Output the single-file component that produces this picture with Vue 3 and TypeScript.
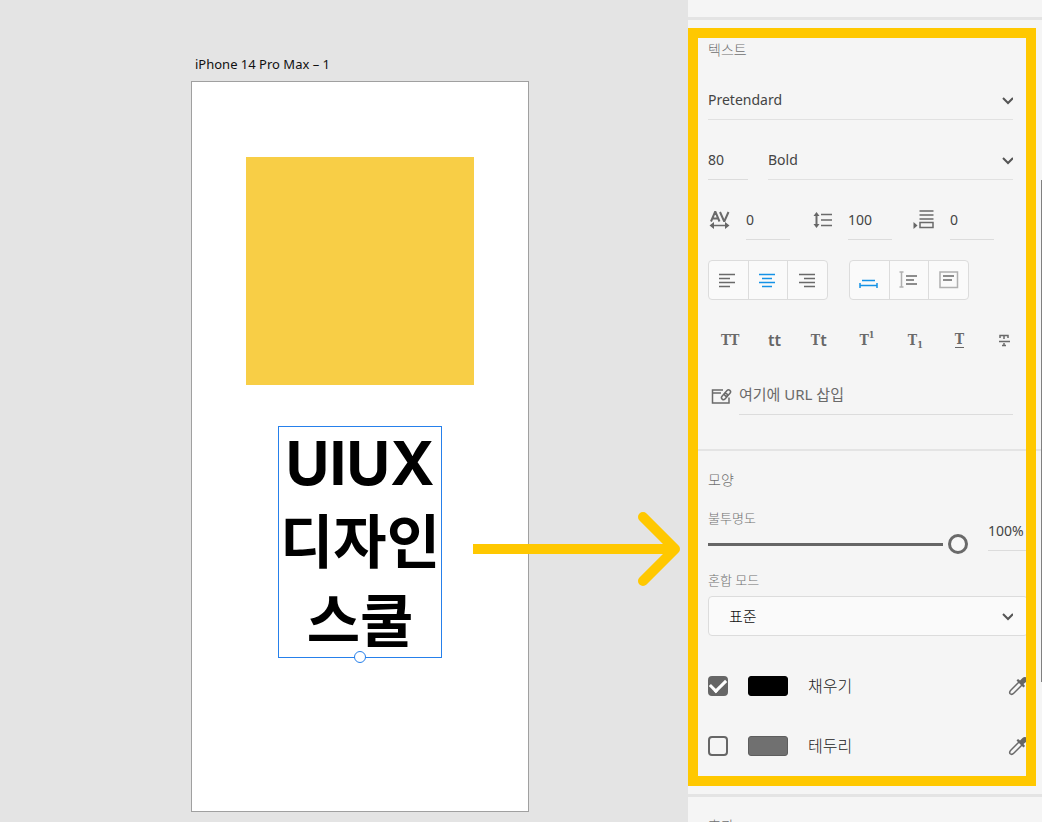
<script setup lang="ts">
import { ref, computed } from 'vue'

type Metric = { id: string; label: string; value: string }
type Paint = { id: string; label: string; on: boolean; color: string; edge: string }

const family = ref('Pretendard')
const weight = ref('Bold')
const size = ref('80')
const link = ref('')
const opacity = ref(100)
const blend = ref('표준')
const align = ref('center')
const opacityText = computed(() => `${opacity.value}%`)

const metrics = ref<Metric[]>([
  { id: 'tracking', label: '문자 간격', value: '0' },
  { id: 'leading', label: '행 간격', value: '100' },
  { id: 'paragraph', label: '단락 간격', value: '0' },
])

const aligns = [
  { id: 'left', label: '왼쪽 정렬', d: 'M1 4.5H17M1 8.5H12M1 12.5H17M1 16.5H12' },
  { id: 'center', label: '가운데 정렬', d: 'M1 4.5H17M4 8.5H14M1 12.5H17M4 16.5H14' },
  { id: 'right', label: '오른쪽 정렬', d: 'M1 4.5H17M6 8.5H17M1 12.5H17M6 16.5H17' },
]

const paints = ref<Paint[]>([
  { id: 'fill', label: '채우기', on: true, color: '#000000', edge: '#000000' },
  { id: 'border', label: '테두리', on: false, color: '#707070', edge: '#5e5e5e' },
])
</script>

<template>
  <div class="app">
    <main class="canvas">
      <div class="artboard-name">iPhone 14 Pro Max – 1</div>
      <div class="artboard">
        <div class="square"></div>
        <div class="text-node">
          <div class="latin">UIUX</div>
          <div>디자인</div>
          <div>스쿨</div>
          <span class="handle"></span>
        </div>
      </div>
      <svg class="arrow" width="208" height="76" viewBox="0 0 208 76" fill="none" stroke="#ffc800" stroke-width="10" aria-hidden="true">
        <path d="M0 38H200" />
        <path d="M170 6L202 38L170 70" stroke-linecap="round" stroke-linejoin="round" />
      </svg>
    </main>

    <aside class="panel">
      <div class="strip"></div>
      <section class="text-section">
        <h2>텍스트</h2>
        <div class="row inset">
          <div class="picker grow">
            <select v-model="family" aria-label="글꼴"><option>Pretendard</option></select>
            <svg class="chevron" width="12" height="12" viewBox="0 0 12 12"><path d="M2 4L7 9L12 4" /></svg>
          </div>
        </div>
        <div class="row inset">
          <input v-model="size" class="line size" aria-label="글꼴 크기" />
          <div class="picker grow">
            <select v-model="weight" aria-label="글꼴 두께"><option>Bold</option></select>
            <svg class="chevron" width="12" height="12" viewBox="0 0 12 12"><path d="M2 4L7 9L12 4" /></svg>
          </div>
        </div>
        <div class="row">
          <label v-for="m in metrics" :key="m.id" class="metric">
            <svg v-if="m.id === 'tracking'" class="icon" width="24" height="24" viewBox="0 0 24 24" :aria-label="m.label">
              <path d="M3 13.500L7 4H7.500L11.500 13.500M4.500 10.500H10M12 4L16 13H16.500L20.500 4" stroke-width="2" />
              <path d="M5 17.500H19" stroke-width="1.500" />
              <path class="solid" d="M1.500 17.500L6 14V21ZM21.500 17.500L17 14V21Z" />
            </svg>
            <svg v-else-if="m.id === 'leading'" class="icon" width="24" height="24" viewBox="0 0 24 24" :aria-label="m.label">
              <path d="M6.500 7V17" stroke-width="2" />
              <path d="M11 6.500H22M11 12H22M11 17.500H22" />
              <path class="solid" d="M6.500 4L9.500 8H3.500ZM6.500 20L9.500 16H3.500Z" />
            </svg>
            <svg v-else class="icon" width="24" height="24" viewBox="0 0 24 24" :aria-label="m.label">
              <path d="M7.500 3H21.500M7.500 7H21.500M7.500 11H21.500M8 14.500H21V19.500H8Z" />
              <path class="solid" d="M1.500 14L5.500 17.500L1.500 21Z" />
            </svg>
            <input v-model="m.value" class="line" />
          </label>
        </div>
        <div class="row groups">
          <div class="group">
            <button v-for="a in aligns" :key="a.id" type="button" :class="{ active: align === a.id }" :aria-label="a.label" @click="align = a.id">
              <svg class="icon" width="20" height="20" viewBox="0 0 20 20"><path :d="a.d" /></svg>
            </button>
          </div>
          <div class="group">
            <button type="button" class="active" aria-label="자동 폭">
              <svg class="icon" width="20" height="20" viewBox="0 0 20 20"><path d="M3 10.500H16M1 15.500H18M1 13V18M18 13V18" /></svg>
            </button>
            <button type="button" aria-label="자동 높이">
              <svg class="icon" width="20" height="20" viewBox="0 0 20 20"><path class="pale" d="M2.500 2V17M.5 2H4.500M.5 17H4.500" /><path d="M7 6H18M7 10H15M7 14H18" /></svg>
            </button>
            <button type="button" aria-label="고정 크기">
              <svg class="icon" width="20" height="20" viewBox="0 0 20 20"><path class="pale" d="M1 2H18.500V17.500H1Z" /><path d="M4 6H15M4 10H13" /></svg>
            </button>
          </div>
        </div>
        <div class="types">
          <button type="button" aria-label="대문자">TT</button>
          <button type="button" aria-label="소문자" class="lower">tt</button>
          <button type="button" aria-label="제목 스타일">T<span class="lower">t</span></button>
          <button type="button" class="shifted" aria-label="위 첨자">T<sup>1</sup></button>
          <button type="button" class="shifted" aria-label="아래 첨자">T<sub>1</sub></button>
          <button type="button" aria-label="밑줄"><span class="under">T</span></button>
          <button type="button" aria-label="취소선">
            <svg class="icon" width="14" height="16" viewBox="0 0 14 16"><path d="M3 6V3.500H11V6M7 3V7M2 9.500H13M7 11V13M5 13.500H9" /></svg>
          </button>
        </div>
        <label class="url inset">
          <svg class="icon" width="24" height="24" viewBox="0 0 24 24" aria-label="링크">
            <path d="M15 7H4.500V20H21V14.500M4.500 10H13" />
            <rect x="13" y="11.500" width="7" height="4" rx="2" transform="rotate(-48 16.500 13.500)" />
            <rect x="16" y="8" width="7" height="4" rx="2" transform="rotate(-48 19.500 10)" />
          </svg>
          <input v-model="link" class="line grow" placeholder="여기에 URL 삽입" />
        </label>
      </section>

      <section class="look-section">
        <h2>모양</h2>
        <div class="opacity">
          <div class="slider">
            <label for="opacity">불투명도</label>
            <input id="opacity" v-model.number="opacity" type="range" min="0" max="100" :style="{ '--fill': opacity / 100 }" />
          </div>
          <input class="line percent" :value="opacityText" aria-label="불투명도 값" />
        </div>
        <label class="blend-label" for="blend">혼합 모드</label>
        <div class="picker boxed">
          <select id="blend" v-model="blend"><option>표준</option></select>
          <svg class="chevron" width="12" height="12" viewBox="0 0 12 12"><path d="M2 4L7 9L12 4" /></svg>
        </div>
        <div v-for="p in paints" :key="p.id" class="paint">
          <input :id="p.id" v-model="p.on" type="checkbox" />
          <button type="button" class="swatch" :aria-label="`${p.label} 색상`" :style="{ background: p.color, borderColor: p.edge }"></button>
          <label :for="p.id">{{ p.label }}</label>
          <button type="button" class="dropper" :aria-label="`${p.label} 스포이드`">
            <svg class="icon" width="20" height="20" viewBox="0 0 20 20">
              <path d="M11.500 5.500L3 14C1.500 15.500 1.500 17 2.200 17.800C3 18.500 4.500 18.500 6 17L14.500 8.500" />
              <path class="solid" d="M8.500 4.500L10 3L12 4.500L14.500 2C16 .5 18 .8 19 2C20 3.500 19.500 4.800 18 6L15.500 8L17 10L15.500 11.500Z" />
            </svg>
          </button>
        </div>
      </section>

      <section class="effects">
        <h2>효과</h2>
      </section>
      <div class="frame"></div>
      <div class="thumb"></div>
    </aside>
  </div>
</template>

<style>
body { background: #e4e4e4; }
</style>

<style scoped>
* { box-sizing: border-box; }
.app {
  display: flex;
  height: 100vh;
  overflow: hidden;
  font-family: "Noto Sans", "Noto Sans CJK KR", sans-serif;
  font-size: 14px;
  color: #444;
}
.canvas { position: relative; flex: 1; background: #e4e4e4; }
.artboard-name { position: absolute; left: 195px; top: 54px; line-height: 20px; font-size: 13px; color: #111; }
.artboard { position: absolute; left: 191px; top: 81px; width: 338px; height: 731px; background: #fff; border: 1px solid #a0a0a0; }
.square { position: absolute; left: 54px; top: 75px; width: 228px; height: 228px; background: #f8ce46; }
.text-node {
  position: absolute;
  left: 86px;
  top: 344px;
  width: 164px;
  height: 232px;
  border: 1px solid #2680eb;
  text-align: center;
  white-space: nowrap;
  font: 700 58px/79px "Noto Sans CJK KR", sans-serif;
  color: #000;
}
.text-node .latin { font-family: Inter, sans-serif; font-size: 60px; line-height: 72px; }
.handle { position: absolute; left: 75px; bottom: -6px; width: 12px; height: 12px; border: 1px solid #2680eb; border-radius: 50%; background: #fff; }
.arrow { position: absolute; left: 473px; top: 511px; }

.panel { position: relative; width: 354px; height: 100%; overflow: hidden; background: #f5f5f5; }
.strip { height: 20px; border-bottom: 3px solid #e4e4e4; }
section { padding: 19px 14px 0 20px; }
.text-section { padding-top: 20px; padding-bottom: 34px; border-bottom: 2px solid #e4e4e4; }
.look-section { padding-bottom: 38px; border-bottom: 3px solid #e4e4e4; }
h2, label { margin: 0; font-weight: 300; font-size: 14px; line-height: 20px; color: #707070; }
input, select, button { font: inherit; color: inherit; margin: 0; padding: 0; border: 0; border-radius: 0; background: none; outline: 0; appearance: none; }
.row { display: flex; gap: 20px; height: 40px; margin-top: 20px; }
.inset { margin-right: 15px; }
.grow { flex: 1; }
.line { min-width: 0; height: 40px; border-bottom: 1px solid #dcdcdc; color: #444; }
.size { width: 40px; }
.picker { display: grid; grid-template-columns: 1fr 12px; align-items: center; height: 40px; border-bottom: 1px solid #e1e1e1; }
.picker select { grid-area: 1 / 1 / 2 / 3; height: 39px; width: 100%; }
.chevron { grid-area: 1 / 2; pointer-events: none; fill: none; stroke: #555; stroke-width: 2; }
.icon { display: block; flex: none; fill: none; stroke: #6a6a6a; stroke-width: 1.5; }
.icon .solid { fill: #666; stroke: none; }
.icon .pale { stroke: #b0b0b0; }
.metric { display: flex; align-items: center; gap: 14px; font-weight: 400; font-size: 14px; }
.metric .line { width: 44px; }
.groups { gap: 21px; }
.group { display: flex; width: 120px; border: 1px solid #dcdcdc; border-radius: 4px; background: #fafafa; }
.group button { flex: 1; display: grid; place-items: center; }
.group button + button { border-left: 1px solid #dcdcdc; }
.group .active .icon { stroke: #1592e6; }
.types { display: flex; height: 40px; margin: 20px 2px 0 0; }
.types button { flex: 1; display: flex; align-items: center; justify-content: center; font: 700 14px/20px "DejaVu Serif Condensed", "DejaVu Serif", serif; color: #6a6a6a; }
.types .lower { font: 600 16px/20px "Noto Sans", sans-serif; color: #666; }
.types .shifted { padding-left: 4px; }
sup, sub { font-size: 9px; line-height: 10px; font-weight: 700; }
sup { margin-bottom: 10px; }
sub { margin-top: 10px; }
.under { line-height: 15px; border-bottom: 1px solid #666; }
.url { display: flex; align-items: center; gap: 7px; margin-top: 15px; }
.url .line { padding-bottom: 2px; font-size: 15px; font-weight: 400; }
.url .line::placeholder { color: #6a6a6a; opacity: 1; }

.opacity { display: flex; gap: 20px; margin-top: 18px; }
.slider { flex: 1; display: grid; gap: 6px; }
.slider input { width: 100%; height: 20px; }
.slider input::-webkit-slider-runnable-track {
  height: 20px;
  background: linear-gradient(#666, #666) 0 9px / calc(var(--fill) * (100% - 20px) - 5px) 3px no-repeat;
}
.slider input::-webkit-slider-thumb { appearance: none; width: 20px; height: 20px; border: 3px solid #6a6a6a; border-radius: 50%; background: #f8f8f8; }
.percent { width: 40px; margin-top: 3px; }
.slider label, .blend-label { font-size: 13px; }
.blend-label { display: block; margin-top: 16px; }
.boxed { margin-top: 6px; padding-right: 14px; border: 1px solid #dcdcdc; border-radius: 4px; background: #fafafa; }
.boxed select { height: 38px; padding-left: 20px; font-size: 15px; font-weight: 300; color: #111; }
.paint { display: flex; align-items: center; gap: 20px; height: 20px; margin-top: 40px; }
.paint input { display: grid; place-items: center; width: 20px; height: 20px; border: 2px solid #666; border-radius: 4px; }
.paint input:checked { background: #666; }
.paint input:checked::after { content: ""; width: 13px; height: 7px; margin-bottom: 4px; border: solid #fff; border-width: 0 0 3px 3px; transform: rotate(-45deg); }
.swatch { width: 40px; height: 20px; border: 1px solid; border-radius: 3px; }
.paint label { flex: 1; font-size: 16px; color: #222; }
.frame { position: absolute; inset: 28px 6px 36px 0; border: 10px solid #ffc800; pointer-events: none; }
.thumb { position: absolute; right: 0; top: 180px; width: 1px; height: 502px; background: #808080; }
</style>
